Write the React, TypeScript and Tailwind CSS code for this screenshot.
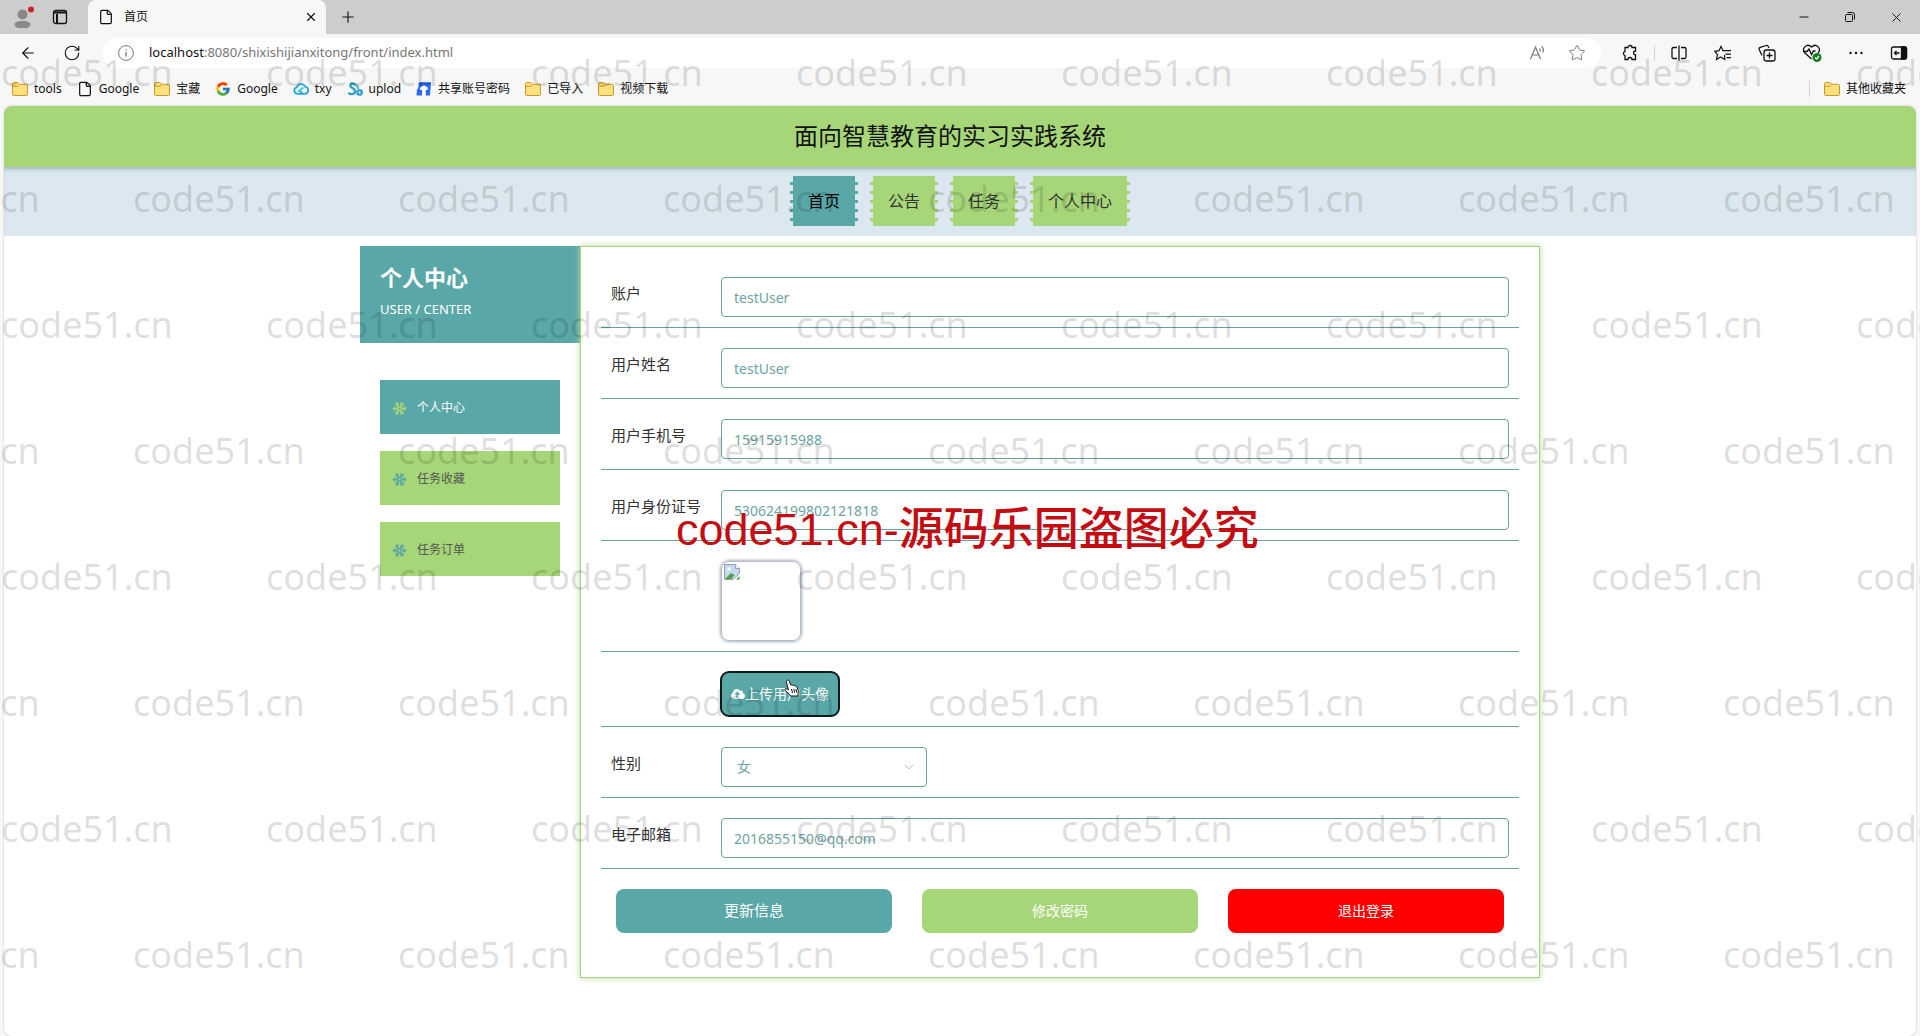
import type { ReactNode } from 'react';
import { ArrowLeft, ChevronDown, File, Minus, Plus, RotateCw, Snowflake, Star, X } from 'lucide-react';
import { FaCloudUploadAlt } from 'react-icons/fa';
import { FcGoogle } from 'react-icons/fc';
import { clsx } from 'clsx';

function FolderIcon() {
  return (
    <svg viewBox="0 0 16 16" className="size-4 shrink-0">
      <path d="M.5 4V2.8c0-.7.5-1.3 1.3-1.3h3.6c.5 0 .8.2 1.1.5l1.3 1.3h6.4c.8 0 1.3.5 1.3 1.2v8.7c0 .8-.5 1.3-1.3 1.3H1.8c-.8 0-1.3-.5-1.3-1.3Z" fill="#ffe07c" stroke="#c79a2b" />
      <path d="M.8 5.3h4.6c.6 0 1-.2 1.3-.6l1.1-1.2" fill="none" stroke="#c79a2b" />
    </svg>
  );
}

function CloudIcon() {
  return (
    <svg viewBox="0 0 16 16" className="size-4 shrink-0" fill="none" strokeWidth="1.8">
      <path d="M9.500 12.800H4.300a3.300 3.300 0 0 1-.4-6.500 4.400 4.400 0 0 1 8.200-.6 3.600 3.600 0 0 1 .1 7.100H10L6 8.800" stroke="#2aa5dc" />
      <path d="m5 11 5.500-4.500" stroke="#3ccbe6" />
    </svg>
  );
}

function UploadSiteIcon() {
  return (
    <svg viewBox="0 0 16 16" className="size-4 shrink-0" fill="none" strokeWidth="2.4">
      <path d="M8.500 4.200C7.700 1.800 3.300 2 3.300 4.600c0 2.800 4.900 2.200 4.900 5.400 0 3.600-5 4-6.700 1.700" stroke="#35a0c0" />
      <path d="M8.500 4.500c1.800-.2 2.500 1.500 2.500 3.500" stroke="#4dc3d8" />
      <circle cx="12.600" cy="11.400" r="2.200" stroke="#3b9fd0" />
    </svg>
  );
}

function SharedDocIcon() {
  return (
    <svg viewBox="0 0 16 16" className="size-4 shrink-0">
      <path d="M3 1.500h12L14 14.500H9.500V8.500L11.500 9V6.500L8 4.500 4.500 6.500 4 9l2.500-.5-.5 6H.5L1 8h1Z" fill="#2a6cf0" />
      <path d="M8 4.500 4.500 6.500 4.200 8.500H6.500L6 14.500h3.500v-6h2v-2Z" fill="#fff" />
      <path d="M3 1.500h12l-.3 2H2.700Z" fill="#1c56c9" />
    </svg>
  );
}

function BrokenImageIcon() {
  return (
    <svg viewBox="0 0 16 16" className="size-4">
      <path d="M.5.5h11L15.500 4.500v5L9 15.500H.5Z" fill="#c4d8f2" stroke="#9aa0a6" />
      <path d="M11.500.5v4h4" fill="#fff" stroke="#9aa0a6" />
      <circle cx="5" cy="5" r="1.800" fill="#fff" />
      <path d="M1 15 7 9l3.500 2L7.500 15Z" fill="#4f9e4a" />
      <path d="m12 15.500 3.500-3.500v3.500Z" fill="#4f9e4a" />
    </svg>
  );
}

type Bookmark = { icon: ReactNode; label: string };

const bookmarks: Bookmark[] = [
  { icon: <FolderIcon />, label: 'tools' },
  { icon: <File className="size-4" strokeWidth={1.8} />, label: 'Google' },
  { icon: <FolderIcon />, label: '宝藏' },
  { icon: <FcGoogle className="size-4" />, label: 'Google' },
  { icon: <CloudIcon />, label: 'txy' },
  { icon: <UploadSiteIcon />, label: 'uplod' },
  { icon: <SharedDocIcon />, label: '共享账号密码' },
  { icon: <FolderIcon />, label: '已导入' },
  { icon: <FolderIcon />, label: '视频下载' },
];

function TabStrip() {
  return (
    <div className="flex h-[34px] items-center bg-[#cdcdcd]">
      <div className="flex h-full w-[88px] items-center gap-4 pl-[14px]">
        <button type="button" aria-label="Profile">
          <svg viewBox="0 0 22 22" className="size-[22px]">
            <circle cx="8.500" cy="8.500" r="5" fill="#8b8886" />
            <path d="M.5 19c0-3 3-4 8-4s8 1 8 4c-1 2.500-4 3.500-8 3.500S1.500 21.500.5 19Z" fill="#8b8886" />
            <circle cx="17" cy="3.500" r="3" fill="#c4262e" />
          </svg>
        </button>
        <button type="button" aria-label="Tab actions">
          <svg viewBox="0 0 16 16" className="size-4" fill="none" stroke="#111" strokeWidth="1.300">
            <rect x="1.500" y="1.500" width="13" height="13" rx="2" />
            <path d="M1.500 3.500h13M5 5v9.500" strokeWidth="2" />
          </svg>
        </button>
      </div>
      <div className="flex h-full w-[238px] items-center rounded-t-lg bg-[#f7f7f7] pl-[10px] pr-2">
        <File className="size-4" strokeWidth={1.8} />
        <span className="ml-[10px] flex-1 text-xs">首页</span>
        <button type="button" aria-label="Close tab">
          <X className="size-[14px]" strokeWidth={2} />
        </button>
      </div>
      <button type="button" aria-label="New tab" className="ml-[13px]">
        <Plus className="size-[18px]" strokeWidth={1.500} />
      </button>
      <div className="ml-auto flex items-center gap-8 pr-4">
        <button type="button" aria-label="Minimize">
          <Minus className="size-[14px]" strokeWidth={1.800} />
        </button>
        <button type="button" aria-label="Restore">
          <svg viewBox="0 0 14 14" className="size-[14px]" fill="none" stroke="#111">
            <rect x="2.500" y="4.500" width="7" height="7" rx="1" />
            <path d="M4.500 2.500h5a2 2 0 0 1 2 2v5" />
          </svg>
        </button>
        <button type="button" aria-label="Close window">
          <X className="size-[15px]" strokeWidth={1.500} />
        </button>
      </div>
    </div>
  );
}

function Toolbar() {
  return (
    <div className="flex h-[38px] items-center pl-[19px] pr-3">
      <button type="button" aria-label="Back">
        <ArrowLeft className="size-[18px]" strokeWidth={1.500} />
      </button>
      <button type="button" aria-label="Refresh" className="ml-[26px]">
        <RotateCw className="size-[18px]" strokeWidth={1.500} />
      </button>
      <div className="ml-[22px] flex h-[30px] flex-1 items-center rounded-full bg-white pl-[15px] pr-[15px] text-[13px] text-[#767676]">
        <svg viewBox="0 0 16 16" className="size-4" fill="none" stroke="#777">
          <circle cx="8" cy="8" r="7.400" />
          <path d="M8 7v4.500M8 4.300v1.300" strokeWidth="1.300" />
        </svg>
        <p className="ml-[15px] flex-1">
          <span className="text-[#111]">localhost</span>:8080/shixishijianxitong/front/index.html
        </p>
        <button type="button" aria-label="Read aloud">
          <svg viewBox="0 0 18 16" className="h-4 w-[18px]" fill="none" stroke="#777" strokeWidth="1.200">
            <path d="M1.500 14 6.500 2l5 12M3.200 10h6.600M10.500 3.500c1 .8 1 2.200.5 3M12.500 1.500c2 1.500 2.200 4 1.200 6" />
          </svg>
        </button>
        <button type="button" aria-label="Add to favorites" className="ml-[21px]">
          <Star className="size-[18px]" strokeWidth={1.300} />
        </button>
      </div>
      <div className="ml-5 flex items-center gap-[26px]">
        <button type="button" aria-label="Extensions">
          <svg viewBox="0 0 18 18" className="size-[18px]" fill="none" stroke="#111" strokeWidth="1.300">
            <path d="M4 3.500h3a2 2 0 0 1 4 0h3.500V7c-2.600-.2-2.600 4 0 3.800v4.700H11a2 2 0 0 0-4 0H4v-4a2.200 2.200 0 0 1 0-4.200Z" />
          </svg>
        </button>
        <span className="-mx-[11px] h-4 w-px bg-[#d3d3d3]" />
        <button type="button" aria-label="Split screen">
          <svg viewBox="0 0 18 18" className="size-[18px]" fill="none" stroke="#111" strokeWidth="1.300">
            <path d="M7 3.500H3.500a1.500 1.500 0 0 0-1.500 1.500v8a1.500 1.500 0 0 0 1.500 1.500H7M11 3.500h3.500A1.500 1.500 0 0 1 16 5v8a1.500 1.500 0 0 1-1.500 1.500H11M9 1.500v15" />
          </svg>
        </button>
        <button type="button" aria-label="Favorites">
          <svg viewBox="0 0 18 18" className="size-[18px]" fill="none" stroke="#111" strokeWidth="1.200">
            <path d="m10.500 11 .3 4.500L6.500 13 2.500 15.500l1-4.800L.8 7.300l4.200-.6L7 2.500l2 4.200h8M11.500 10.200H17M12.500 13.700H17" />
          </svg>
        </button>
        <button type="button" aria-label="Collections">
          <svg viewBox="0 0 18 18" className="size-[18px]" fill="none" stroke="#111" strokeWidth="1.300">
            <path d="M4 11.500 1.200 5.500c-.4-1 0-1.800 1-2.200l6-1.800c1-.3 1.800.1 2.100 1L11 4" />
            <rect x="6" y="6" width="11" height="11" rx="2.500" />
            <path d="M11.500 8.500v6M8.500 11.500h6" />
          </svg>
        </button>
        <button type="button" aria-label="Browser essentials">
          <svg viewBox="0 0 20 20" className="size-5" fill="none" stroke="#111" strokeWidth="1.300">
            <path d="M9.500 16 3 10C-1 5.500 5-.5 9.500 4c4.500-4.500 10.500 1.500 6.500 6M1 8.500h4L7 6l2.500 5.500L11.500 8h2" />
            <circle cx="15" cy="14.500" r="4.500" fill="#157f22" stroke="none" />
            <path d="m13 14.500 1.500 1.500 2.500-3" stroke="#fff" />
          </svg>
        </button>
        <button type="button" aria-label="Settings and more">
          <svg viewBox="0 0 16 16" className="size-4" fill="#111">
            <circle cx="2.500" cy="8" r="1.200" />
            <circle cx="8" cy="8" r="1.200" />
            <circle cx="13.500" cy="8" r="1.200" />
          </svg>
        </button>
        <button type="button" aria-label="Sidebar">
          <svg viewBox="0 0 18 18" className="size-[18px]" fill="none" stroke="#111" strokeWidth="1.300">
            <rect x="1.500" y="3" width="15" height="12" rx="2" />
            <path d="M11.500 3H15a1.500 1.500 0 0 1 1.500 1.500v9A1.500 1.500 0 0 1 15 15h-3.500Z" fill="#111" />
            <path d="M9.500 9H4.500m2-2-2 2 2 2" />
          </svg>
        </button>
      </div>
    </div>
  );
}

function BookmarksBar() {
  return (
    <div className="flex h-[34px] items-center pl-3 pr-[14px] text-xs">
      <div className="flex items-center gap-[15px]">
        {bookmarks.map((bookmark, index) => (
          <a key={index} href="#" className="flex items-center gap-[6px]">
            {bookmark.icon}
            {bookmark.label}
          </a>
        ))}
      </div>
      <a href="#" className="ml-auto flex items-center gap-[6px] border-l border-[#d3d3d3] pl-[14px]">
        <FolderIcon />
        其他收藏夹
      </a>
    </div>
  );
}

const navItems = ['首页', '公告', '任务', '个人中心'];

function SiteNav() {
  return (
    <nav className="flex h-[69px] justify-center gap-[18px] bg-[#dce8f0] pt-[9px] shadow-[inset_0_4px_4px_-2px_#9fb3bb]">
      {navItems.map((item, index) => (
        <a
          key={item}
          href="#"
          className={clsx(
            'relative h-[50px] px-[15px] text-base leading-[50px]',
            "before:absolute before:inset-y-[3px] before:-left-[3px] before:w-[3px] before:bg-size-[3px_9px] before:content-['']",
            "after:absolute after:inset-y-[3px] after:-right-[3px] after:w-[3px] after:bg-size-[3px_9px] after:content-['']",
            index === 0
              ? 'bg-[#5aa7a7] text-black before:bg-[radial-gradient(circle,#5aa7a7_2px,transparent_2px)] after:bg-[radial-gradient(circle,#5aa7a7_2px,transparent_2px)]'
              : 'bg-[#a6d678] text-[#333] before:bg-[radial-gradient(circle,#a6d678_2px,transparent_2px)] after:bg-[radial-gradient(circle,#a6d678_2px,transparent_2px)]',
          )}
        >
          {item}
        </a>
      ))}
    </nav>
  );
}

const sideItems = ['个人中心', '任务收藏', '任务订单'];

function Sidebar() {
  return (
    <aside className="w-[220px] shrink-0">
      <div className="h-[97px] bg-[#5aa7a7] px-5 pt-[15px] text-white">
        <h2 className="text-[22px] font-bold leading-8">个人中心</h2>
        <p className="text-[13px] leading-8">USER / CENTER</p>
      </div>
      <ul className="mt-[37px] flex flex-col gap-[17px] px-5">
        {sideItems.map((item, index) => (
          <li key={item}>
            <a
              href="#"
              className={clsx(
                'flex h-[54px] items-center gap-[10px] pl-3 pt-[2px] text-xs',
                index === 0 ? 'bg-[#5aa7a7] text-white' : 'bg-[#a6d678] text-[#555]',
              )}
            >
              <Snowflake className={clsx('size-[15px]', index === 0 ? 'text-[#a6d678]' : 'text-[#5aa7a7]')} strokeWidth={2.500} />
              {item}
            </a>
          </li>
        ))}
      </ul>
    </aside>
  );
}

type FormRowProps = { label?: string; htmlFor?: string; children: ReactNode };

function FormRow({ label, htmlFor, children }: FormRowProps) {
  return (
    <div className="flex items-start border-b border-[#6c9fa2] px-[10px] pb-[10px] pt-5">
      <div className="w-[110px] shrink-0 text-[15px] leading-8 text-[#333]">
        {label ? <label htmlFor={htmlFor}>{label}</label> : null}
      </div>
      {children}
    </div>
  );
}

function TextRow({ id, label, value }: { id: string; label: string; value: string }) {
  return (
    <FormRow label={label} htmlFor={id}>
      <input
        id={id}
        type="text"
        defaultValue={value}
        className="h-10 min-w-0 flex-1 rounded border border-[#6c9fa2] bg-white px-3 text-sm text-[#6fa3a3]"
      />
    </FormRow>
  );
}

function HandCursor() {
  return (
    <svg viewBox="0 0 16 18" className="absolute left-[63px] top-[7px] h-[18px] w-4">
      <path
        d="M3.500 1.200c.8-.3 1.500.1 1.800.9l1.500 4c.7-.5 1.500-.3 1.900.3.700-.4 1.600-.2 2 .5.900-.4 1.900.1 2.200 1l1.300 3.500c.3 1.200 0 2-.2 3L14 17H6.500C5.500 14.500 2.500 13 1 11.200c-.6-.9.300-1.900 1.400-1.400l2 1L2.400 3c-.3-.9.300-1.500 1.100-1.800Z"
        fill="#fff"
        stroke="#111"
      />
      <path d="m7.500 10 1 4M9.800 10l.9 3.800M12 10l.6 3.500" stroke="#111" />
    </svg>
  );
}

function ProfileForm() {
  return (
    <form className="min-w-0 flex-1 border border-[#a6cf80] bg-white px-5 pb-11 pt-[10px] shadow-[0_0_6px_#b5dc92]">
      <TextRow id="account" label="账户" value="testUser" />
      <TextRow id="name" label="用户姓名" value="testUser" />
      <TextRow id="phone" label="用户手机号" value="15915915988" />
      <TextRow id="idNumber" label="用户身份证号" value="530624199802121818" />
      <FormRow>
        <div className="size-20 rounded-lg border border-[#b4bcc8] p-[2px] shadow-[0_0_3px_1px_#a9b2c0]">
          <BrokenImageIcon />
        </div>
      </FormRow>
      <FormRow>
        <button
          type="button"
          className="relative flex h-11 w-[118px] items-center justify-center rounded-lg bg-[#5aa7a7] text-sm text-white outline-2 -outline-offset-1 outline-[#0b1a1a]"
        >
          <FaCloudUploadAlt className="size-[14px]" />
          上传用户头像
          <HandCursor />
        </button>
      </FormRow>
      <FormRow label="性别" htmlFor="gender">
        <div className="relative">
          <select
            id="gender"
            defaultValue="女"
            className="h-10 w-[206px] appearance-none rounded border border-[#6c9fa2] bg-white px-[15px] text-sm text-[#6fa3a3]"
          >
            <option>女</option>
            <option>男</option>
          </select>
          <ChevronDown className="pointer-events-none absolute right-[10px] top-3 size-4 text-[#c2c2c2]" strokeWidth={1.500} />
        </div>
      </FormRow>
      <TextRow id="email" label="电子邮箱" value="2016855150@qq.com" />
      <div className="flex gap-[30px] px-[15px] pt-5 text-sm text-white">
        <button type="submit" className="h-11 flex-1 rounded-lg bg-[#5aa7a7] text-[15px]">
          更新信息
        </button>
        <button type="button" className="h-11 flex-1 rounded-lg bg-[#a6d678]">
          修改密码
        </button>
        <button type="button" className="h-11 flex-1 rounded-lg bg-[#ff0000]">
          退出登录
        </button>
      </div>
    </form>
  );
}

const stampRows = Array.from({ length: 8 }, (_, index) => index);
const stampColumns = Array.from({ length: 9 }, (_, index) => index);

function Watermark() {
  return (
    <div aria-hidden="true" className="pointer-events-none absolute inset-0 overflow-hidden pt-[10px]">
      {stampRows.map((row) => (
        <div key={row} className={clsx('flex text-[36px] leading-[126px] text-black/15', row % 2 ? '-ml-[132px]' : 'ml-px')}>
          {stampColumns.map((column) => (
            <span key={column} className="w-[265px] shrink-0">
              code51.cn
            </span>
          ))}
        </div>
      ))}
      <p className="absolute left-[676px] top-[500px] whitespace-nowrap font-['Liberation_Sans','Noto_Sans_CJK_SC',sans-serif] text-[45px] font-medium leading-[60px] text-[#c40d12]">
        code51.cn-源码乐园盗图必究
      </p>
    </div>
  );
}

export default function App() {
  return (
    <div className="relative flex min-h-screen flex-col bg-[#f7f7f7] font-['Noto_Sans','Noto_Sans_CJK_SC',sans-serif] text-[#111]">
      <header>
        <TabStrip />
        <Toolbar />
        <BookmarksBar />
      </header>
      <div className="mx-1 flex-1 overflow-hidden rounded-lg bg-white shadow-[0_0_2px_#bbb]">
        <h1 className="bg-[#a6d678] pb-[2px] pr-5 text-center text-2xl leading-[59px]">面向智慧教育的实习实践系统</h1>
        <SiteNav />
        <main className="mx-auto flex max-w-[1200px] items-start pb-10 pr-5 pt-[10px]">
          <Sidebar />
          <ProfileForm />
        </main>
      </div>
      <Watermark />
    </div>
  );
}
